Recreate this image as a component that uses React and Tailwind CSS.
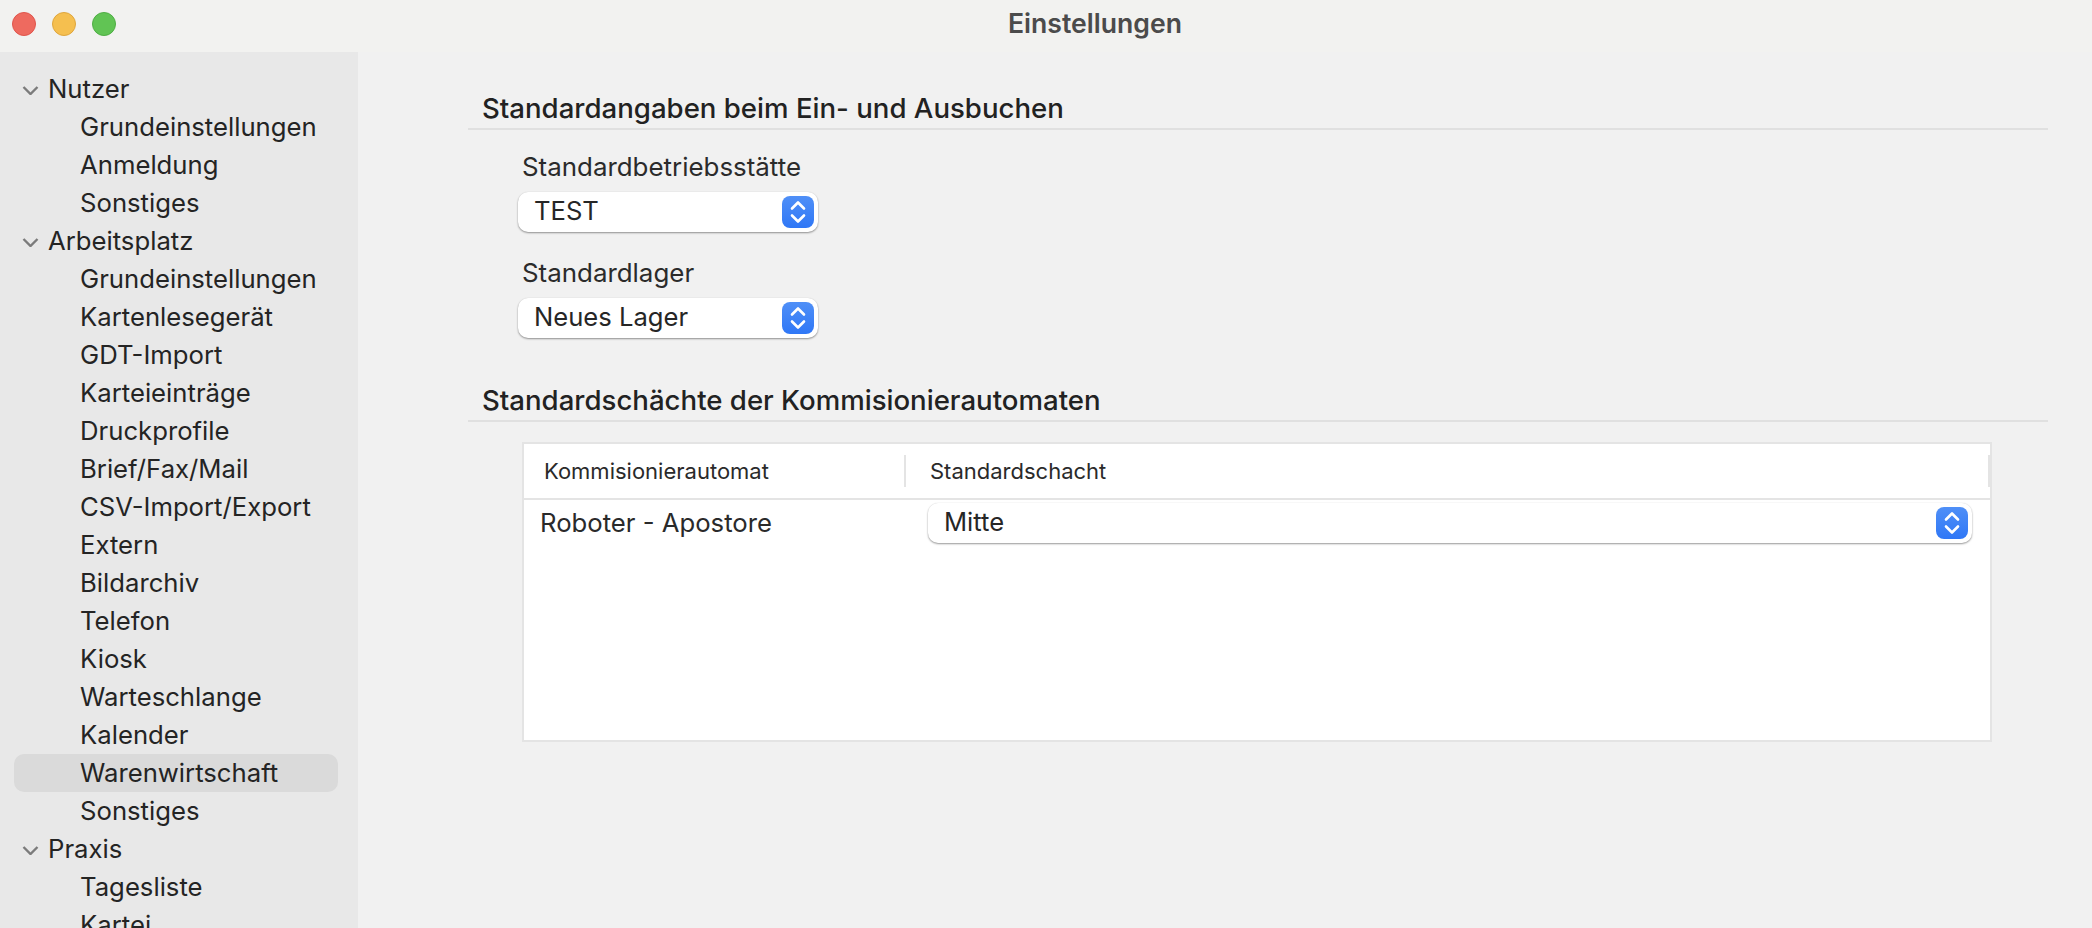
import React from 'react';

const sidebar = [
  { title: 'Nutzer', items: ['Grundeinstellungen', 'Anmeldung', 'Sonstiges'] },
  {
    title: 'Arbeitsplatz',
    items: [
      'Grundeinstellungen',
      'Kartenlesegerät',
      'GDT-Import',
      'Karteieinträge',
      'Druckprofile',
      'Brief/Fax/Mail',
      'CSV-Import/Export',
      'Extern',
      'Bildarchiv',
      'Telefon',
      'Kiosk',
      'Warteschlange',
      'Kalender',
      'Warenwirtschaft',
      'Sonstiges',
    ],
  },
  { title: 'Praxis', items: ['Tagesliste', 'Kartei'] },
];

function Disclosure() {
  return (
    <svg width="18" height="12" viewBox="0 0 18 12" fill="none" className="shrink-0">
      <path d="M1.5 4 L8.5 11 L15.5 4" stroke="#7b7b7b" strokeWidth="2.4" />
    </svg>
  );
}

function SelectBox({ value, className }) {
  return (
    <div className={`flex h-10 items-center justify-between rounded-[10px] bg-white pl-4 pr-1 shadow-[0_1px_2px_rgba(0,0,0,0.4),0_0_1px_rgba(0,0,0,0.1)] ${className}`}>
      <span className="pb-[3px] text-[25.6px] leading-none text-[#262626]">{value}</span>
      <div className="flex h-8 w-8 items-center justify-center rounded-lg bg-gradient-to-b from-[#4f8ff7] to-[#2f77f6]">
        <svg width="20" height="26" viewBox="0 0 20 26" fill="none">
          <path d="M4 9.5 L10 3.5 L16 9.5 M4 16.5 L10 22.5 L16 16.5" stroke="white" strokeWidth="2.6" strokeLinecap="round" strokeLinejoin="round" />
        </svg>
      </div>
    </div>
  );
}

function SectionTitle({ children }) {
  return (
    <div className="ml-[8px] mr-[44px] h-[38px] border-b-2 border-[#e0e0e0] pl-[14px]">
      <h2 className="text-[27.6px] font-medium leading-[32px] text-[#222]">{children}</h2>
    </div>
  );
}

export default function App() {
  return (
    <div className="flex h-[928px] w-[2092px] flex-col overflow-hidden bg-[#f1f1f1] font-['Inter',sans-serif]">
      {/* Title bar */}
      <div className="flex h-[52px] shrink-0 items-center bg-[#f2f2f0] pl-3">
        <div className="mb-1 h-6 w-6 rounded-full border border-[#e0554c] bg-[#ee6a5f]" />
        <div className="mb-1 ml-4 h-6 w-6 rounded-full border border-[#dfa63d] bg-[#f5bf4f]" />
        <div className="mb-1 ml-4 h-6 w-6 rounded-full border border-[#4fae44] bg-[#61c454]" />
        <div className="ml-[892px] -translate-y-[2px] text-[26.6px] font-semibold text-[#4b4b4b]">Einstellungen</div>
      </div>

      <div className="flex min-h-0 flex-1">
        {/* Sidebar */}
        <div className="w-[358px] shrink-0 overflow-hidden bg-[#e8e8e8] pt-[18px] text-[25.7px] text-[#242424]">
          {sidebar.map((group) => (
            <div key={group.title}>
              <div className="flex h-[38px] items-center pl-[22px]">
                <Disclosure />
                <span className="ml-[8px]">{group.title}</span>
              </div>
              {group.items.map((item, i) => (
                <div
                  key={i}
                  className={`mx-[14px] flex h-[38px] w-[324px] items-center rounded-[10px] pl-[66px] ${item === 'Warenwirtschaft' ? 'bg-[#dadada]' : ''}`}
                >
                  {item}
                </div>
              ))}
            </div>
          ))}
        </div>

        {/* Content */}
        <div className="min-w-0 flex-1 pt-[40px] pl-[102px]">
          <SectionTitle>Standardangaben beim Ein- und Ausbuchen</SectionTitle>

          <div className="pl-[58px] pt-[20px] text-[25.9px] leading-[34px] text-[#2b2b2b]">
            <div className="ml-[4px]">Standardbetriebsstätte</div>
            <SelectBox value="TEST" className="mt-[8px] w-[300px]" />
            <div className="ml-[4px] mt-[24px]">Standardlager</div>
            <SelectBox value="Neues Lager" className="mt-[8px] w-[300px]" />
          </div>

          <div className="mt-[46px]">
            <SectionTitle>Standardschächte der Kommisionierautomaten</SectionTitle>
          </div>

          {/* Table */}
          <div className="ml-[62px] mt-[20px] h-[300px] w-[1470px] border-2 border-[#e4e4e4] bg-white">
            <div className="flex h-[56px] items-center border-b-2 border-[#e4e4e4] text-[22px] text-[#2a2a2a]">
              <div className="w-[380px] pl-[20px]">Kommisionierautomat</div>
              <div className="h-8 w-0.5 bg-[#e4e4e4]" />
              <div className="flex-1 pl-[24px]">Standardschacht</div>
              <div className="h-8 w-0.5 bg-[#e4e4e4]" />
            </div>
            <div className="flex items-center pt-[3px]">
              <div className="w-[404px] pl-[16px] text-[25.7px] text-[#2a2a2a]">Roboter - Apostore</div>
              <SelectBox value="Mitte" className="w-[1044px]" />
            </div>
          </div>
        </div>
      </div>
    </div>
  );
}
